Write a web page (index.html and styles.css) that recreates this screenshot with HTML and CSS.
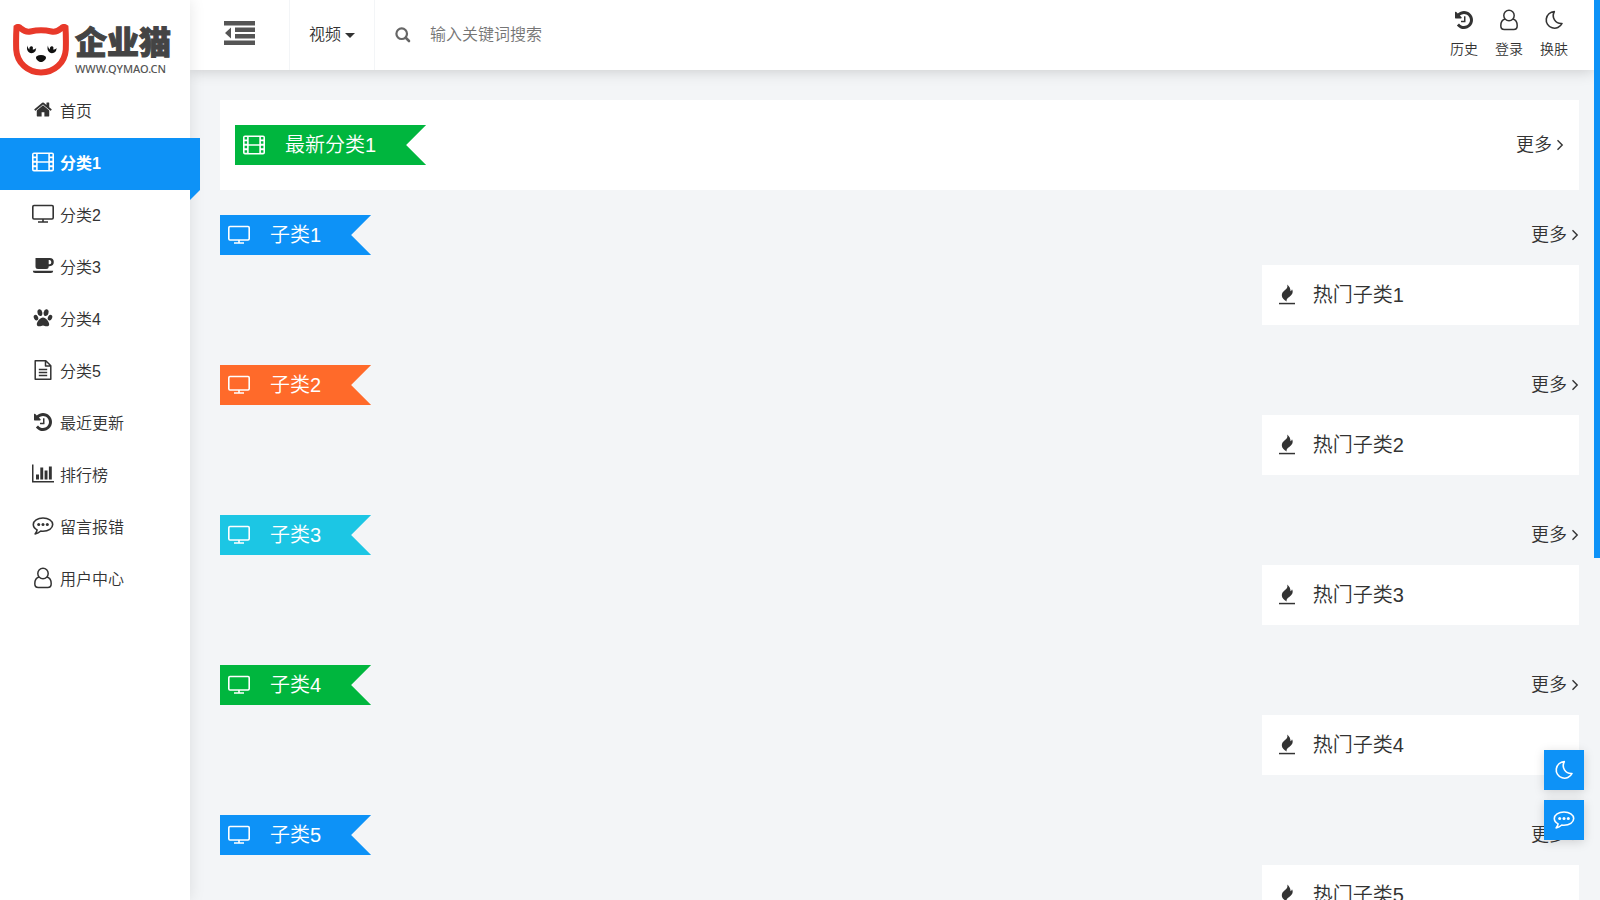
FILE: index.html
```html
<!DOCTYPE html>
<html lang="zh-CN">
<head>
<meta charset="utf-8">
<title>企业猫</title>
<link rel="stylesheet" href="styles.css">
</head>
<body>
<svg class="sprite" aria-hidden="true">
  <symbol id="home" viewBox="-121 -75 2034 2034"><path fill="currentColor" d="M1472 992v480q0 26-19 45t-45 19h-384v-384h-256v384h-384q-26 0-45-19t-19-45v-480q0-1 .5-3t.5-3l575-474 575 474q1 2 1 6zm223-69l-62 74q-8 9-21 11h-3q-13 0-21-7l-692-577-692 577q-12 8-24 7-13-2-21-11l-62-74q-8-10-7-23.500t11-21.500l719-599q32-26 76-26t76 26l244 204v-195q0-14 9-23t23-9h192q14 0 23 9t9 23v408l219 182q10 8 11 21.500t-7 23.500z"/></symbol>
  <symbol id="history" viewBox="-43 -43 1878 1878"><path fill="currentColor" d="M1664 896q0 156-61 298t-164 245-245 164-298 61q-172 0-327-72.500t-264-204.500q-7-10-6.500-22.500t8.500-20.500l137-138q10-9 25-9 16 2 23 12 73 95 179 147t225 52q104 0 198.500-40.500t163.500-109.500 109.500-163.500 40.500-198.500-40.500-198.500-109.500-163.500-163.500-109.500-198.500-40.500q-98 0-188 35.500t-160 101.500l137 138q31 30 14 69-17 40-59 40h-448q-26 0-45-19t-19-45v-448q0-42 40-59 39-17 69 14l130 129q107-101 244.500-156.500t284.500-55.500q156 0 298 61t245 164 164 245 61 298zm-640-288v448q0 14-9 23t-23 9h-320q-14 0-23-9t-9-23v-64q0-14 9-23t23-9h224v-352q0-14 9-23t23-9h64q14 0 23 9t9 23z"/></symbol>
  <symbol id="film" viewBox="0 0 22 22"><path fill="currentColor" fill-rule="evenodd" d="M2 1.500h18a2 2 0 0 1 2 2v15a2 2 0 0 1-2 2H2a2 2 0 0 1-2-2v-15a2 2 0 0 1 2-2zM1.600 3v2.500h2.500V3zM1.600 7.300v2.500h2.500V7.300zM1.600 11.800v2.500h2.500v-2.500zM1.600 16.200v2.500h2.500v-2.500zM17.900 3v2.500h2.500V3zM17.900 7.300v2.500h2.500V7.300zM17.900 11.800v2.500h2.500v-2.500zM17.900 16.200v2.500h2.500v-2.500zM5.700 3v7.200h10.600V3zM5.700 11.800V19h10.600v-7.200z"/></symbol>
  <symbol id="monitor" viewBox="0 0 22 22"><g fill="none" stroke="currentColor" stroke-width="1.600"><rect x=".8" y="2.500" width="20.400" height="13.500" rx="1.200"/><path d="M11 16v2.500M6 19h10"/></g></symbol>
  <symbol id="coffee" viewBox="0 0 22 22"><path fill="currentColor" fill-rule="evenodd" d="M3.500 3h14.200a3.900 3.900 0 0 1 0 8.200h-1v.3a2.500 2.500 0 0 1-2.500 2.500H6a2.500 2.500 0 0 1-2.500-2.500zM16.700 5v4.300h.9a2.200 2.200 0 0 0 0-4.300zM.8 15.700h20.400a2.300 2.300 0 0 1-2.300 2.300H3.100a2.300 2.300 0 0 1-2.300-2.300z"/></symbol>
  <symbol id="paw" viewBox="0 0 22 22"><g fill="currentColor"><ellipse cx="7.900" cy="5.700" rx="2.400" ry="3.400" transform="rotate(-12 7.900 5.700)"/><ellipse cx="14.100" cy="5.700" rx="2.400" ry="3.400" transform="rotate(12 14.100 5.700)"/><ellipse cx="4" cy="10.700" rx="2.100" ry="2.900" transform="rotate(-25 4 10.700)"/><ellipse cx="18" cy="10.700" rx="2.100" ry="2.900" transform="rotate(25 18 10.700)"/><path d="M11 10.400c2.800 0 6.200 4.200 6.200 6.800 0 1.600-1.200 2.100-2.500 2.100-1.500 0-2.400-.9-3.700-.9s-2.200.9-3.700.9c-1.300 0-2.500-.5-2.500-2.100 0-2.600 3.400-6.800 6.200-6.800z"/></g></symbol>
  <symbol id="file" viewBox="0 0 22 22"><g fill="none" stroke="currentColor" stroke-width="1.500" stroke-linejoin="round"><path d="M3.200 1.700h10.600l5 5v13.600H3.200zM13.500 1.700v5.300h5.300"/><path d="M6.800 10.500h8.400M6.800 13.500h8.400M6.800 16.500h8.400"/></g></symbol>
  <symbol id="chart" viewBox="0 0 22 22"><path fill="currentColor" d="M0 1.500h1.500V18H22v1.500H0zM4 11.500h3v5H4zM8.300 4.500h2.900v12H8.300zM12.600 7.500h2.900v9h-2.900zM16.900 3.500h2.900v13h-2.900z"/></symbol>
  <symbol id="comment" viewBox="0 0 22 22"><path fill="none" stroke="currentColor" stroke-width="1.600" stroke-linejoin="round" d="M11 3c5.400 0 9.700 2.900 9.700 6.600s-4.300 6.600-9.700 6.600c-.8 0-1.500 0-2.200-.2-1.700 1.500-3.300 2.400-5.700 2.900 1-1.200 1.800-2.300 2-4C2.700 13.700 1.300 11.800 1.300 9.600 1.300 5.900 5.600 3 11 3z"/><g fill="currentColor"><circle cx="6.700" cy="9.600" r="1.500"/><circle cx="11" cy="9.600" r="1.500"/><circle cx="15.300" cy="9.600" r="1.500"/></g></symbol>
  <symbol id="user" viewBox="0 0 22 22"><g fill="none" stroke="currentColor" stroke-width="1.500"><circle cx="11" cy="6.500" r="5.200"/><path d="M7 10c-2.700.7-4.200 3.500-4.200 6.700 0 2.500 1.400 3.800 3.500 3.800h9.400c2.100 0 3.500-1.300 3.500-3.800 0-3.200-1.500-6-4.200-6.700"/></g></symbol>
  <symbol id="moon" viewBox="0 0 22 22"><path fill="none" stroke="currentColor" stroke-width="1.600" stroke-linejoin="round" d="M11.300 2.600c-3 5.800 1 12.400 7.700 11.900A8.300 8.300 0 1 1 11.300 2.600z"/></symbol>
  <symbol id="fire" viewBox="0 0 22 22"><path fill="currentColor" d="M11.200.5c.8 2.500-.3 4-2.200 5.600-1.800 1.500-3.200 3-3.200 5.200 0 3 2.200 4.400 4.900 6.200-.6-2 .3-3 2.500-4.600 2-1.500 3.500-3 3.500-5.200 0-.9-.2-1.700-.7-2.400-.3 1.200-.8 1.700-1.500 2C14.700 4.700 13.300 2.300 11.200.5z"/><path fill="currentColor" d="M3 18.800h16v1.500H3z"/></symbol>
  <symbol id="search" viewBox="0 0 16 16"><path fill="none" stroke="currentColor" stroke-width="2.200" d="M12 6.700a5.300 5.300 0 1 1-10.600 0 5.300 5.300 0 0 1 10.600 0z"/><path stroke="currentColor" stroke-width="2.600" stroke-linecap="round" d="M11 11l3 3"/></symbol>
  <symbol id="outdent" viewBox="0 0 31 24"><path fill="currentColor" d="M0 0h31v4.500H0zM0 19.500h31V24H0zM11 6.500h20V11H11zM11 13h20v4.500H11zM7 6.500v11L1 12z"/></symbol>
  <symbol id="chevron" viewBox="0 0 8 12"><path fill="none" stroke="currentColor" stroke-width="1.400" d="M1.500 1.300L6.200 6l-4.700 4.700"/></symbol>
</svg>

<aside class="sidebar">
  <a class="logo" href="#">
    <svg class="logo-cat" viewBox="0 0 56 52" aria-hidden="true">
      <path d="M3.500 3.500C5 2.500 6.500 3 8 4.500c3 2.700 6 3.800 9.500 3 7-1.600 14-1.600 21 0 3.500.8 6.500-.3 9.500-3 1.500-1.500 3-2 4.500-1 .5 8 .5 15 .3 22C52 39 41 48.500 28 48.500S4 39 3.200 25.500c-.2-7-.2-14 .3-22z" fill="#fff" stroke="#e8392a" stroke-width="6"/>
      <path d="M14.500 21.500c-2.300 5.500 3.500 10.700 8 5.500l.7-3c-1 1.300-2.400 1.700-3.600 1.200 1.200-1.800-.3-3.700-2-2.800-1.300.7-1.500 2-1 3-1.400-.8-2.100-2-2.100-3.900zM35 21.500c-2.300 5.500 3.500 10.700 8 5.500l.7-3c-1 1.300-2.400 1.700-3.600 1.200 1.200-1.800-.3-3.700-2-2.800-1.300.7-1.500 2-1 3-1.400-.8-2.100-2-2.100-3.900zM28 31c3.500 0 5.300 1.400 5 3-.4 1.800-3 4-5 4s-4.600-2.200-5-4c-.3-1.600 1.500-3 5-3z" fill="#111"/>
    </svg>
    <span class="logo-text"><b>企业猫</b><small>WWW.QYMAO.CN</small></span>
  </a>
  <nav class="nav">
    <a href="#"><svg><use href="#home"/></svg>首页</a>
    <a href="#" class="active"><svg><use href="#film"/></svg>分类1</a>
    <a href="#"><svg><use href="#monitor"/></svg>分类2</a>
    <a href="#"><svg><use href="#coffee"/></svg>分类3</a>
    <a href="#"><svg><use href="#paw"/></svg>分类4</a>
    <a href="#"><svg><use href="#file"/></svg>分类5</a>
    <a href="#"><svg><use href="#history"/></svg>最近更新</a>
    <a href="#"><svg><use href="#chart"/></svg>排行榜</a>
    <a href="#"><svg><use href="#comment"/></svg>留言报错</a>
    <a href="#"><svg><use href="#user"/></svg>用户中心</a>
  </nav>
</aside>

<div class="page">
  <header class="topbar">
    <button class="toggle" aria-label="收起菜单"><svg><use href="#outdent"/></svg></button>
    <button class="type">视频<i class="caret"></i></button>
    <form class="search">
      <button type="button" aria-label="搜索"><svg><use href="#search"/></svg></button>
      <input type="text" placeholder="输入关键词搜索" aria-label="输入关键词搜索">
    </form>
    <div class="tools">
      <a href="#"><svg><use href="#history"/></svg>历史</a>
      <a href="#"><svg><use href="#user"/></svg>登录</a>
      <a href="#"><svg><use href="#moon"/></svg>换肤</a>
    </div>
  </header>

  <main class="content">
    <section class="panel head">
      <h2 class="ribbon green"><svg><use href="#film"/></svg>最新分类1</h2>
      <a class="more" href="#">更多<svg><use href="#chevron"/></svg></a>
    </section>
    <section class="block">
      <div class="head"><h2 class="ribbon blue"><svg><use href="#monitor"/></svg>子类1</h2><a class="more" href="#">更多<svg><use href="#chevron"/></svg></a></div>
      <div class="cols"><h3 class="hot"><svg><use href="#fire"/></svg>热门子类1</h3></div>
    </section>
    <section class="block">
      <div class="head"><h2 class="ribbon orange"><svg><use href="#monitor"/></svg>子类2</h2><a class="more" href="#">更多<svg><use href="#chevron"/></svg></a></div>
      <div class="cols"><h3 class="hot"><svg><use href="#fire"/></svg>热门子类2</h3></div>
    </section>
    <section class="block">
      <div class="head"><h2 class="ribbon cyan"><svg><use href="#monitor"/></svg>子类3</h2><a class="more" href="#">更多<svg><use href="#chevron"/></svg></a></div>
      <div class="cols"><h3 class="hot"><svg><use href="#fire"/></svg>热门子类3</h3></div>
    </section>
    <section class="block">
      <div class="head"><h2 class="ribbon green"><svg><use href="#monitor"/></svg>子类4</h2><a class="more" href="#">更多<svg><use href="#chevron"/></svg></a></div>
      <div class="cols"><h3 class="hot"><svg><use href="#fire"/></svg>热门子类4</h3></div>
    </section>
    <section class="block">
      <div class="head"><h2 class="ribbon blue"><svg><use href="#monitor"/></svg>子类5</h2><a class="more" href="#">更多<svg><use href="#chevron"/></svg></a></div>
      <div class="cols"><h3 class="hot"><svg><use href="#fire"/></svg>热门子类5</h3></div>
    </section>
  </main>
</div>

<div class="floating">
  <button aria-label="换肤"><svg><use href="#moon"/></svg></button>
  <button aria-label="留言"><svg><use href="#comment"/></svg></button>
</div>
<div class="scroll-thumb"></div>
</body>
</html>
```
FILE: styles.css
```css
* {
  box-sizing: border-box;
  margin: 0;
  padding: 0;
}

html {
  height: 100%;
  overflow: hidden;
}

body {
  display: flex;
  height: 100%;
  padding-right: 6px;
  overflow: hidden;
  background: #f3f5f7;
  color: #333;
  font: 350 16px/1.5 "Liberation Sans", "Noto Sans CJK SC", sans-serif;
}

a {
  color: inherit;
  text-decoration: none;
}

button,
input {
  border: 0;
  background: none;
  color: inherit;
  font: inherit;
}

svg {
  display: block;
  flex: none;
  width: 22px;
  height: 22px;
}

.sprite {
  position: absolute;
  width: 0;
  height: 0;
}

.sidebar {
  position: relative;
  z-index: 3;
  flex: none;
  width: 190px;
  background: #fff;
  box-shadow: 0 0 15px rgba(0, 0, 0, 0.1);
}

.logo {
  display: flex;
  gap: 6px;
  height: 86px;
  padding: 24px 0 0 13px;
}

.logo-cat {
  width: 56px;
  height: 52px;
}

.logo-text b {
  display: block;
  color: #444;
  font-size: 32px;
  font-weight: 900;
  line-height: 38px;
  -webkit-text-stroke: 1px #444;
}

.logo-text small {
  display: block;
  color: #555;
  font: 500 11px/14px "Noto Sans", sans-serif;
}

.nav a {
  display: flex;
  align-items: center;
  gap: 6px;
  height: 52px;
  padding-left: 32px;
}

.nav svg {
  margin-bottom: 4px;
}

.nav .active {
  position: relative;
  width: 200px;
  background: #0d92f7;
  color: #fff;
  font-weight: 700;
}

.nav .active::after {
  content: "";
  position: absolute;
  top: 100%;
  right: 0;
  width: 10px;
  height: 10px;
  background: #0d92f7;
  clip-path: polygon(0 0, 100% 0, 0 100%);
}

.page {
  flex: 1;
  min-width: 0;
}

.topbar {
  position: relative;
  z-index: 2;
  display: flex;
  height: 70px;
  background: #fff;
  box-shadow: 0 0 15px rgba(0, 0, 0, 0.2);
}

.toggle {
  width: 100px;
  padding: 0 0 4px 34px;
  border-right: 1px solid #f3f5f7;
  color: #555;
}

.toggle svg {
  width: 31px;
  height: 24px;
}

.type {
  display: flex;
  align-items: center;
  gap: 4px;
  padding: 0 19px;
  border-right: 1px solid #f3f5f7;
}

.caret {
  border: 5px solid transparent;
  border-top-color: #333;
  border-bottom: 0;
}

.search {
  display: flex;
  flex: 1;
  align-items: center;
  gap: 19px;
  padding-left: 20px;
  color: #666;
}

.search svg {
  width: 16px;
  height: 16px;
}

.search input {
  flex: 1;
  height: 40px;
}

.search input::placeholder {
  color: #757575;
}

.tools {
  display: flex;
  gap: 17px;
  padding: 9px 26px 0 0;
  font-size: 14px;
  line-height: 20px;
}

.tools a {
  display: flex;
  flex-direction: column;
  align-items: center;
  gap: 8px;
}

.content {
  padding: 30px 15px 0 30px;
}

.head {
  display: flex;
  align-items: center;
  justify-content: space-between;
}

.panel {
  padding: 25px 15px;
  background: #fff;
}

.block {
  height: 125px;
  margin-top: 25px;
}

.ribbon {
  display: flex;
  align-items: center;
  gap: 20px;
  height: 40px;
  padding: 0 50px 0 8px;
  color: #fff;
  font-size: 20px;
  font-weight: 350;
  clip-path: polygon(0 0, 100% 0, calc(100% - 20px) 50%, 100% 100%, 0 100%);
}

.green { background: #00b63e; }
.blue { background: #0d92f7; }
.orange { background: #ff6a2a; }
.cyan { background: #1cc6e4; }

.more {
  display: flex;
  align-items: center;
  gap: 4px;
  font-size: 18px;
}

.more svg {
  width: 8px;
  height: 12px;
}

.cols {
  display: grid;
  grid-template-columns: repeat(4, 1fr);
  gap: 30px;
  margin-top: 10px;
}

.hot {
  display: flex;
  grid-column: 4;
  align-items: center;
  gap: 15px;
  height: 60px;
  padding-left: 14px;
  background: #fff;
  font-size: 20px;
  font-weight: 350;
}

.floating {
  position: fixed;
  z-index: 4;
  right: 16px;
  bottom: 60px;
  display: flex;
  flex-direction: column;
  gap: 10px;
}

.floating button {
  display: flex;
  align-items: center;
  justify-content: center;
  width: 40px;
  height: 40px;
  background: #0d92f7;
  box-shadow: 0 2px 10px rgba(0, 0, 0, 0.15);
  color: #fff;
}

.scroll-thumb {
  position: fixed;
  z-index: 5;
  top: 0;
  right: 0;
  width: 6px;
  height: 62%;
  background: #0d92f7;
}
```
